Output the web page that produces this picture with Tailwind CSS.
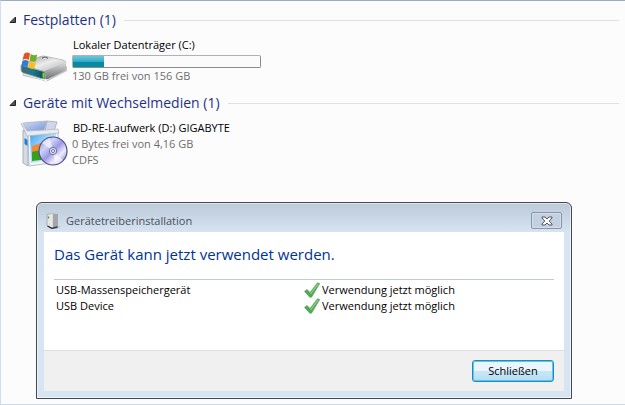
<!DOCTYPE html>
<html lang="de">
  <head>
    <meta charset="UTF-8" />
    <meta name="viewport" content="width=device-width, initial-scale=1.0" />
    <title>Computer</title>
    <script src="https://cdn.jsdelivr.net/npm/@tailwindcss/browser@4"></script>
  </head>
  <body
    class="min-h-screen flex flex-col bg-[#fcfcfc] border-t border-l border-b border-t-[#9dabc5] border-l-[#cfdff2] border-b-[#cbdaec] font-['Open_Sans',sans-serif] text-[11px] leading-4 text-black"
  >
    <!-- Drive list -->
    <main class="pt-[9px] pr-1.5">
      <section>
        <div class="flex items-center pl-2">
          <svg class="w-2 h-2 shrink-0" viewBox="0 0 8 8" aria-hidden="true">
            <path d="M6.5 1v5.5H1z" fill="#555" stroke="#222" />
          </svg>
          <h2 class="ml-1.5 mr-2 text-sm leading-5 text-[#1e3287]">Festplatten (1)</h2>
          <div class="grow h-px bg-[#e0e0e0]"></div>
        </div>
        <div class="flex gap-1 mt-[7px] pl-[19px]">
          <svg class="w-12 h-12 shrink-0" viewBox="0 0 48 48" aria-hidden="true">
            <defs>
              <linearGradient id="driveTop" x1="0" y1="0" x2="1" y2="1">
                <stop offset="0" stop-color="#8f9192" />
                <stop offset=".5" stop-color="#ececec" />
                <stop offset="1" stop-color="#b0b1b2" />
              </linearGradient>
              <linearGradient id="driveFront" x1="0" y1="0" x2="1" y2="0">
                <stop offset="0" stop-color="#4b6874" />
                <stop offset=".5" stop-color="#197b8d" />
                <stop offset="1" stop-color="#17424c" />
              </linearGradient>
              <linearGradient id="driveSide" x1="0" y1="0" x2="0" y2="1">
                <stop offset="0" stop-color="#dedede" />
                <stop offset="1" stop-color="#6d6f71" />
              </linearGradient>
            </defs>
            <path d="M2 37L26 44L47 29V34L28 44Q24 45 21 43L3 39z" fill="#000" opacity=".22" />
            <path d="M1 28L19 20Q21 19 24 19L43 23Q46 24 46 26L27 34Q25 35 22 34L2 29z" fill="url(#driveTop)" stroke="#9fa1a2" stroke-width=".6" />
            <path d="M25 34L46 25V31Q46 33 44 34L28 42Q25 43 25 41z" fill="url(#driveSide)" />
            <path d="M1 28L22 34Q25 34 25 36V42L21 41.500L3 36Q1 35 1 33z" fill="url(#driveFront)" stroke="#a4b0b4" stroke-width=".9" />
            <path d="M22.500 35.500l2 .5v5l-2-.6z" fill="#69e51b" />
            <ellipse cx="25" cy="21" rx="3" ry="1.2" fill="#666" />
            <ellipse cx="25" cy="21.5" rx="2" ry=".7" fill="#eee" />
            <path d="M4 17q3-2.500 6-.5l-1.200 6.500q-3-2-6.300 0z" fill="#e2551f" />
            <path d="M10.700 17q3 2 6.500.5l-1.200 6.500q-3.500 1.500-6.500-.5z" fill="#72ad2d" />
            <path d="M2.300 24q3-2 6.300 0l-1.200 6.200q-3-2-6 0z" fill="#2c7fd3" />
            <path d="M9.300 24.500q3 2 6.500.5l-1.200 6q-3.500 1.500-6.500-.5z" fill="#fbbd17" />
          </svg>
          <div>
            <h3 class="pl-px">Lokaler Datenträger (C:)</h3>
            <div
              class="mt-0.5 w-[189px] h-[13px] rounded-xs border border-[#b2b2b2] border-b-[#8c8c8c] border-r-[#8c8c8c] bg-[#fbfbfb]"
              role="meter"
              aria-label="Belegter Speicherplatz"
              aria-valuemin="0"
              aria-valuemax="156"
              aria-valuenow="26"
            >
              <div
                class="h-full bg-linear-to-b from-[#69c9df] from-0% via-[#35a9c4] via-50% to-[#078ba5] to-55%"
                style="width: 16.5%"
              ></div>
            </div>
            <p class="text-[#6d6d6d]">130 GB frei von 156 GB</p>
          </div>
        </div>
      </section>

      <section class="mt-2">
        <div class="flex items-center pl-2">
          <svg class="w-2 h-2 shrink-0" viewBox="0 0 8 8" aria-hidden="true">
            <path d="M6.5 1v5.5H1z" fill="#555" stroke="#222" />
          </svg>
          <h2 class="ml-1.5 mr-2 text-sm leading-5 text-[#1e3287]">Geräte mit Wechselmedien (1)</h2>
          <div class="grow h-px bg-[#e0e0e0]"></div>
        </div>
        <div class="flex gap-1 mt-[7px] pl-[19px]">
          <svg class="w-12 h-12 shrink-0" viewBox="0 0 48 48" aria-hidden="true">
            <defs>
              <linearGradient id="boxFront" x1="0" y1="0" x2="1" y2="1">
                <stop offset="0" stop-color="#3fa6ee" />
                <stop offset=".55" stop-color="#bfe4fb" />
                <stop offset="1" stop-color="#fff" />
              </linearGradient>
              <linearGradient id="boxInside" x1="0" y1="0" x2="1" y2="1">
                <stop offset="0" stop-color="#d5def2" />
                <stop offset="1" stop-color="#6f92d8" />
              </linearGradient>
              <linearGradient id="disc" x1="0" y1="0" x2="1" y2="1">
                <stop offset="0" stop-color="#7f7fd4" />
                <stop offset=".3" stop-color="#d2d2fb" />
                <stop offset=".5" stop-color="#9a9be3" />
                <stop offset=".7" stop-color="#efebff" />
                <stop offset="1" stop-color="#6667b8" />
              </linearGradient>
            </defs>
            <path d="M3 10L8 14V46L3 43z" fill="#d3dbe5" stroke="#9da3aa" stroke-width=".8" />
            <path d="M4.500 18l3 2v6l-3-2z" fill="#1f7fd6" />
            <path d="M8 14L38 11V42L9 46z" fill="#f4f8fd" stroke="#a8aeb7" stroke-width=".8" />
            <path d="M10 15L36 13V40L11 43z" fill="url(#boxFront)" />
            <path d="M12 29l9-2v13l-9 1z" fill="#36a01f" />
            <path d="M12 26l9-3v7l-9 2z" fill="#f18b36" />
            <path d="M3 3L27 1L24 10L8 12z" fill="url(#boxInside)" stroke="#aab2c2" stroke-width=".8" />
            <path d="M27 1L37 2L34 11H25z" fill="#d0d6ea" stroke="#a2a8b6" stroke-width=".8" />
            <path d="M1 3L7 11L26 10L38 9L39 13L7 16z" fill="#e8ecf2" stroke="#aeb3bb" stroke-width=".7" />
            <circle cx="33" cy="31" r="14" fill="url(#disc)" stroke="#4f4f86" stroke-width="1.2" />
            <path d="M33 31L22 23A14 14 0 0 1 30 18zM33 31l10 9a13 13 0 0 1-8 4z" fill="#fff" opacity=".6" />
            <circle cx="33" cy="31" r="3.7" fill="#d9d9ef" stroke="#7272a9" />
            <circle cx="33" cy="31" r="1.5" fill="#fff" stroke="#555577" stroke-width=".8" />
          </svg>
          <div>
            <h3 class="pl-px">BD-RE-Laufwerk (D:) GIGABYTE</h3>
            <p class="text-[#6d6d6d]">0 Bytes frei von 4,16 GB</p>
            <p class="text-[#6d6d6d]">CDFS</p>
          </div>
        </div>
      </section>
    </main>

    <!-- Driver installation dialog -->
    <div
      class="mt-[34px] ml-[35px] mr-[53px] px-[7px] pb-[7px] rounded-t-md border border-[#46484c] bg-[#d7e4f2] bg-linear-to-b from-[#bccad9] to-[#d7e4f2] to-[30px] inset-ring inset-ring-white/50"
      role="dialog"
      aria-labelledby="dialog-title"
    >
      <div class="flex items-center h-[29px] pt-1.5 pl-0.5 pr-0.5">
        <svg class="w-4 h-4 shrink-0" viewBox="0 0 16 16" aria-hidden="true">
          <path d="M5 13l6 1 4-1-5 3z" fill="#000" opacity=".25" />
          <path d="M1 1.5L6 .5V15.5L1 13z" fill="#e4e6e6" stroke="#8c9295" stroke-width=".6" />
          <path d="M6 .5L12 1V13.5L6 15.5z" fill="#a3a7a9" />
          <path d="M6 .8v14.5" stroke="#fff" stroke-width="1.2" />
          <path d="M1.5 13L6 15.4L11.5 13.8" stroke="#303234" stroke-width="1.4" fill="none" />
          <path d="M2.5 3.5v2" stroke="#4aa33c" stroke-width="1.4" />
        </svg>
        <h2 id="dialog-title" class="ml-1 grow text-[#4a5159]">Gerätetreiberinstallation</h2>
        <button
          type="button"
          aria-label="Fenster schließen"
          class="flex items-center justify-center w-[31px] h-[17px] rounded-xs border border-[#8995ad] bg-[#c3d0df] inset-ring inset-ring-white/30"
        >
          <svg class="w-3 h-[10px]" viewBox="0 0 12 10" aria-hidden="true">
            <path
              d="M1 1h3l2 2 2-2h3v1L8.200 5 11 8v1H8L6 7 4 9H1V8l2.800-3L1 2z"
              fill="#fff"
              stroke="#535666"
              stroke-linejoin="round"
            />
          </svg>
        </button>
      </div>

      <div class="bg-white">
        <div class="px-2.5 pt-3 pb-9">
          <p class="pb-[15px] text-[15px] leading-5 text-[#003399] border-b border-[#c3cad2]">
            Das Gerät kann jetzt verwendet werden.
          </p>
          <table class="w-full mt-0.5">
            <tbody>
              <tr>
                <th scope="row" class="w-1/2 p-0 pl-0.5 text-left font-normal">USB-Massenspeichergerät</th>
                <td class="p-0">
                  <div class="flex items-center gap-0.5">
                    <svg class="w-4 h-4 shrink-0" viewBox="0 0 16 16" aria-hidden="true">
                      <path d="M.6 9.500L3 7.400l3 3.200L13.500.8l2.200.8L7.500 15.200H5.800z" fill="#4bab4b" stroke="#6f9f72" stroke-width=".8" />
                      <path d="M6.500 12L14 2" stroke="#8ed488" stroke-width="1.2" />
                    </svg>
                    Verwendung jetzt möglich
                  </div>
                </td>
              </tr>
              <tr>
                <th scope="row" class="w-1/2 p-0 pl-0.5 text-left font-normal">USB Device</th>
                <td class="p-0">
                  <div class="flex items-center gap-0.5">
                    <svg class="w-4 h-4 shrink-0" viewBox="0 0 16 16" aria-hidden="true">
                      <path d="M.6 9.500L3 7.400l3 3.200L13.500.8l2.200.8L7.500 15.200H5.800z" fill="#4bab4b" stroke="#6f9f72" stroke-width=".8" />
                      <path d="M6.500 12L14 2" stroke="#8ed488" stroke-width="1.2" />
                    </svg>
                    Verwendung jetzt möglich
                  </div>
                </td>
              </tr>
            </tbody>
          </table>
        </div>
        <div class="flex justify-end px-2.5 py-[9px] bg-[#f0f0f0] border-t border-[#dfdfdf]">
          <button
            type="button"
            class="w-[82px] h-[22px] rounded-[3px] border border-[#3c7fb1] bg-linear-to-b from-[#eaf6fd] from-50% via-[#c9e8f8] via-50% to-[#b4ddf3] inset-ring inset-ring-[#45d0f5]"
          >
            Schließen
          </button>
        </div>
      </div>
    </div>
  </body>
</html>
